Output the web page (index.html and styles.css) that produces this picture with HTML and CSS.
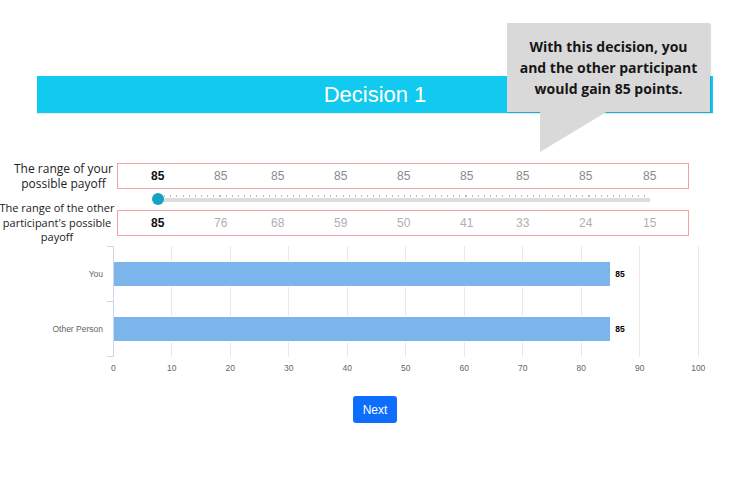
FILE: index.html
```html
<!DOCTYPE html>
<html>
<head>
<meta charset="utf-8">
<link rel="stylesheet" href="styles.css">
</head>
<body>
<div class="page">
  <header class="header">
    <div class="banner">Decision 1</div>
    <div class="bubble">With this decision, you<br>and the other participant<br>would gain 85 points.</div>
  </header>

  <section class="ranges">
    <div class="label label-you">The range of your possible payoff</div>
    <div class="rbox">
      <div class="nums nums-you">
        <span class="cur">85</span><span>85</span><span>85</span><span>85</span><span>85</span><span>85</span><span>85</span><span>85</span><span>85</span>
      </div>
    </div>
    <div class="slider-cell">
      <div class="slider"><span class="knob"></span></div>
    </div>
    <div class="label label-other">The range of the other participant's possible payoff</div>
    <div class="rbox">
      <div class="nums nums-other">
        <span class="cur">85</span><span>76</span><span>68</span><span>59</span><span>50</span><span>41</span><span>33</span><span>24</span><span>15</span>
      </div>
    </div>
  </section>

  <section class="chart">
    <div class="chart-main">
      <div class="cats">
        <div class="cat">You</div>
        <div class="cat">Other Person</div>
      </div>
      <div class="plot">
        <span class="tick t1"></span><span class="tick t2"></span><span class="tick t3"></span>
        <div class="bar-row"><div class="bar" style="width:85%"></div><span class="dl">85</span></div>
        <div class="bar-row"><div class="bar" style="width:85%"></div><span class="dl">85</span></div>
      </div>
    </div>
    <div class="xaxis">
      <span>0</span><span>10</span><span>20</span><span>30</span><span>40</span><span>50</span><span>60</span><span>70</span><span>80</span><span>90</span><span>100</span>
    </div>
  </section>

  <div class="actions">
    <button class="next">Next</button>
  </div>
</div>
</body>
</html>
```

FILE: styles.css
```css
* { box-sizing: border-box; }
html, body { margin: 0; padding: 0; background: #fff; }
body { width: 750px; height: 500px; overflow: hidden; font-family: "Liberation Sans", Arial, sans-serif; }
.page { width: 750px; }

.header { position: relative; padding-top: 76px; height: 163px; }
.banner {
  margin: 0 37px;
  height: 37px;
  background: #12c9ef;
  color: #fff;
  font-family: "Liberation Sans", Arial, sans-serif;
  font-size: 22px;
  line-height: 38px;
  text-align: center;
  box-shadow: 0 1px 1px rgba(0,0,0,0.08);
}
.bubble {
  position: absolute;
  left: 507px;
  top: 23px;
  width: 203px;
  height: 89px;
  background: #d9d9d9;
  color: #161616;
  font-family: "Open Sans", sans-serif;
  font-weight: 700;
  font-size: 14px;
  line-height: 21px;
  text-align: center;
  padding: 13px 0 0;
  white-space: nowrap;
  box-shadow: 1px 1px 1px rgba(0,0,0,0.12);
}
.bubble::after {
  content: "";
  position: absolute;
  left: 33px;
  top: 88px;
  width: 68px;
  height: 41px;
  background: #d9d9d9;
  clip-path: polygon(0 0, 100% 0, 0 100%);
}

.ranges {
  display: grid;
  grid-template-columns: 117px 572px;
  grid-template-rows: 26px 21px 26px;
}
.label {
  font-family: "Open Sans", sans-serif;
  color: #222;
  text-align: center;
  align-self: center;
}
.label-you { padding-left: 10px; font-size: 12px; line-height: 15px; }
.label-other { margin-left: -3px; font-size: 11px; line-height: 14.5px; }
.rbox {
  border: 1px solid #f3a3a3;
  display: flex;
  align-items: center;
}
.nums {
  display: grid;
  grid-template-columns: 63px 57px 63px 63px 63px 56px 63px 64px 40px;
  padding-left: 33px;
  font-size: 12px;
  width: 100%;
}
.nums span { justify-self: start; }
.nums-you span { color: #8a8a8a; }
.nums-other span { color: #b0b0b0; }
.nums .cur { color: #111; font-weight: 700; }

.slider-cell { grid-column: 2; }
.slider {
  position: relative;
  margin: 6px 0 0 41px;
  width: 492px;
  height: 7px;
  background:
    repeating-linear-gradient(to right, #bdbdbd 0 1px, transparent 1px 6.15px) 0 0 / 100% 2px no-repeat,
    linear-gradient(#dcdcdc, #dcdcdc) 0 3px / 100% 4px no-repeat;
}
.knob {
  position: absolute;
  left: -6px;
  top: -2px;
  width: 12px;
  height: 12px;
  border-radius: 50%;
  background: #16a2c4;
}

.chart { margin-top: 10px; }
.chart-main { display: flex; }
.cats {
  width: 113px;
  padding-right: 10px;
  display: flex;
  flex-direction: column;
  padding-top: 15px;
  gap: 29px;
}
.cat {
  height: 26px;
  line-height: 26px;
  text-align: right;
  font-size: 8.5px;
  color: #666;
}
.plot {
  position: relative;
  width: 586px;
  height: 111px;
  border-left: 1px solid #ccd6eb;
  background: repeating-linear-gradient(to right, transparent 0 57.5px, #e9e9e9 57.5px 58.5px);
  display: flex;
  flex-direction: column;
  padding-top: 15px;
  gap: 29px;
}
.tick { position: absolute; left: -7px; width: 6px; height: 1px; background: #ccd6eb; }
.t1 { top: 0; }
.t2 { top: 55px; }
.t3 { top: 110px; }
.bar-row { display: flex; align-items: center; height: 26px; }
.bar { height: 26px; background: #7cb5ec; border: 1px solid #fff; border-left: 0; }
.dl { margin-left: 4px; font-size: 8.5px; font-weight: 700; color: #000; }

.xaxis {
  display: flex;
  margin-left: 84px;
  margin-top: 5px;
}
.xaxis span {
  width: 58.5px;
  text-align: center;
  font-size: 8.5px;
  color: #666;
  line-height: 12px;
}

.actions { display: flex; justify-content: center; margin-top: 22px; }
.next {
  width: 44px;
  height: 27px;
  border: 0;
  border-radius: 3px;
  background: #0d6efd;
  color: #fff;
  font-family: "Liberation Sans", Arial, sans-serif;
  font-size: 12px;
  padding: 0;
}
```
